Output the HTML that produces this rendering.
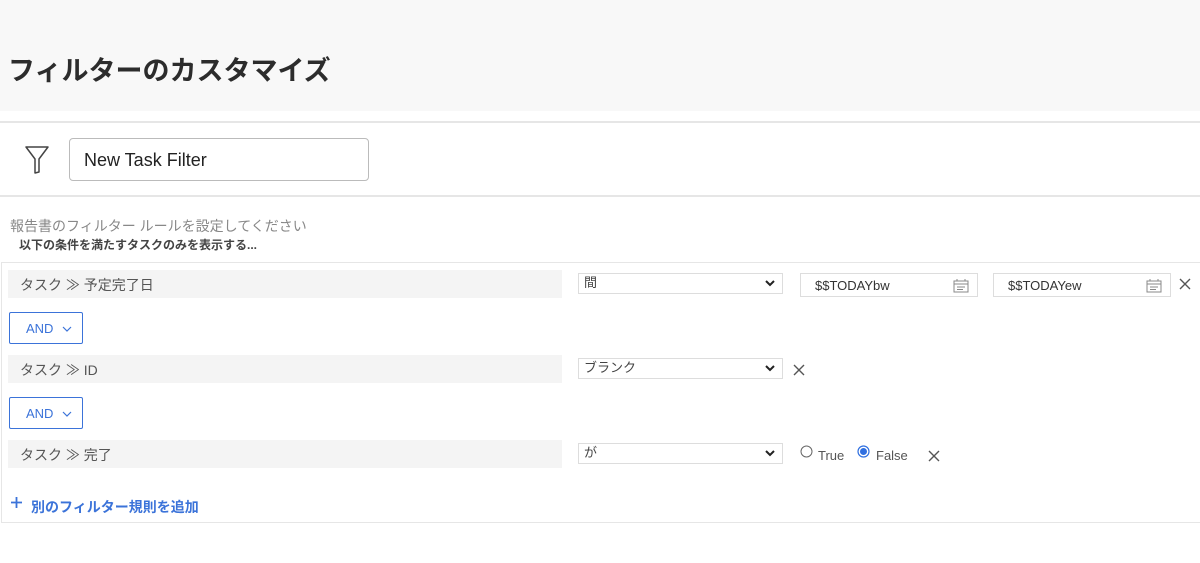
<!DOCTYPE html>
<html><head><meta charset="utf-8"><style>
*{box-sizing:border-box;margin:0;padding:0}
body{width:1200px;height:563px;background:#fff;font-family:"Liberation Sans","Noto Sans CJK JP",sans-serif;position:relative;overflow:hidden;color:#333}
.a{position:absolute}
.hdr{left:0;top:0;width:1200px;height:111px;background:#f8f8f8}
.title{left:8px;top:49px;font-size:27px;font-weight:bold;color:#2c2c2c}
.hl{height:2px;background:#e6e6e6;left:0;width:1200px}
.inp{left:69px;top:138px;width:300px;height:43px;border:1px solid #bbb;border-radius:4px;font-size:18px;padding:11px 14px;color:#222}
.bar{left:8px;width:554px;height:28px;background:#f4f4f4;font-size:14px;color:#555;padding:5px 12px}
.sel{left:578px;width:205px;height:21px;border:1px solid #ddd;font-size:13px;color:#444;padding:0 5px;line-height:18px}
.sel svg{position:absolute;right:6px;top:5px}
.date{top:273px;width:178px;height:24px;border:1px solid #ddd;font-size:13px;padding:4px 14px;color:#333}
.date svg{position:absolute;right:8px;top:4px}
.and{left:9px;width:74px;height:32px;border:1px solid #3b73d9;border-radius:2px;color:#3b73d9;font-size:13px;padding:8px 16px;white-space:nowrap}
.and svg{position:absolute;left:52px;top:13px}
</style></head><body>
<div class="a hdr"></div>
<div class="a title">フィルターのカスタマイズ</div>
<div class="a hl" style="top:121px"></div>
<svg class="a" style="left:24px;top:145px" width="26" height="30" viewBox="0 0 26 30"><path d="M2 2 H24 L15 14 V27 L11 28 V14 Z" fill="none" stroke="#444" stroke-width="1.5" stroke-linejoin="round"/></svg>
<div class="a inp">New Task Filter</div>
<div class="a hl" style="top:195px"></div>
<div class="a" style="left:10px;top:216px;font-size:14px;color:#888">報告書のフィルター ルールを設定してください</div>
<div class="a" style="left:19px;top:236px;font-size:12px;color:#444;font-weight:bold">以下の条件を満たすタスクのみを表示する...</div>
<div class="a" style="left:1px;top:262px;width:1199px;height:261px;border:1px solid #e6e6e6;border-right:none"></div>

<div class="a bar" style="top:270px">タスク ≫ 予定完了日</div>
<div class="a sel" style="top:273px">間<svg width="12" height="8" viewBox="0 0 12 8"><path d="M2 2 L6 6 L10 2" fill="none" stroke="#222" stroke-width="2"/></svg></div>
<div class="a date" style="left:800px">$$TODAYbw<svg width="16" height="15" viewBox="0 0 16 15"><path d="M1 3 H15 V14 H1 Z M1 6 H15 M4 1 V3 M12 1 V3 M4 9 H12 M4 11.5 H10" fill="none" stroke="#888" stroke-width="1"/></svg></div>
<div class="a date" style="left:993px">$$TODAYew<svg width="16" height="15" viewBox="0 0 16 15"><path d="M1 3 H15 V14 H1 Z M1 6 H15 M4 1 V3 M12 1 V3 M4 9 H12 M4 11.5 H10" fill="none" stroke="#888" stroke-width="1"/></svg></div>
<svg class="a" style="left:1179px;top:278px" width="12" height="12"><path d="M1 1 L11 11 M11 1 L1 11" stroke="#555" stroke-width="1.4"/></svg>
<div class="a and" style="top:312px">AND<svg width="10" height="6" viewBox="0 0 10 6"><path d="M1 1 L5 5 L9 1" fill="none" stroke="#3b73d9" stroke-width="1.2"/></svg></div>

<div class="a bar" style="top:355px">タスク ≫ ID</div>
<div class="a sel" style="top:358px">ブランク<svg width="12" height="8" viewBox="0 0 12 8"><path d="M2 2 L6 6 L10 2" fill="none" stroke="#222" stroke-width="2"/></svg></div>
<svg class="a" style="left:793px;top:364px" width="12" height="12"><path d="M1 1 L11 11 M11 1 L1 11" stroke="#555" stroke-width="1.4"/></svg>
<div class="a and" style="top:397px">AND<svg width="10" height="6" viewBox="0 0 10 6"><path d="M1 1 L5 5 L9 1" fill="none" stroke="#3b73d9" stroke-width="1.2"/></svg></div>

<div class="a bar" style="top:440px">タスク ≫ 完了</div>
<div class="a sel" style="top:443px">が<svg width="12" height="8" viewBox="0 0 12 8"><path d="M2 2 L6 6 L10 2" fill="none" stroke="#222" stroke-width="2"/></svg></div>
<svg class="a" style="left:800px;top:445px" width="13" height="13"><circle cx="6.5" cy="6.5" r="5.5" fill="#fff" stroke="#666"/></svg>
<div class="a" style="left:818px;top:448px;font-size:13px;color:#555">True</div>
<svg class="a" style="left:857px;top:445px" width="13" height="13"><circle cx="6.5" cy="6.5" r="5.5" fill="#fff" stroke="#2f6fe0" stroke-width="1.2"/><circle cx="6.5" cy="6.5" r="3.5" fill="#2f6fe0"/></svg>
<div class="a" style="left:876px;top:448px;font-size:13px;color:#555">False</div>
<svg class="a" style="left:928px;top:450px" width="12" height="12"><path d="M1 1 L11 11 M11 1 L1 11" stroke="#555" stroke-width="1.4"/></svg>

<svg class="a" style="left:11px;top:497px" width="11" height="11"><path d="M5.5 0 V11 M0 5.5 H11" stroke="#3b73d9" stroke-width="1.8"/></svg>
<div class="a" style="left:31px;top:497px;font-size:14px;color:#3b73d9;font-weight:bold">別のフィルター規則を追加</div>
</body></html>
